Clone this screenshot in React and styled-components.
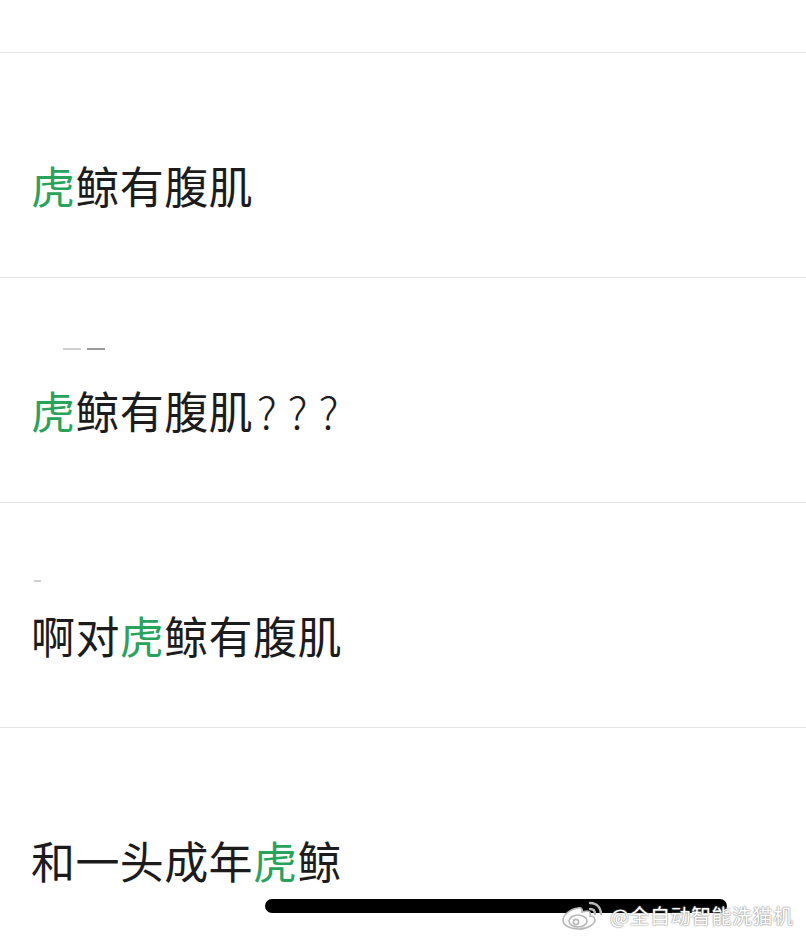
import React from 'react'
import styled, { createGlobalStyle } from 'styled-components'

const rows = [
    { parts: [['虎', 'g'], ['鲸有腹肌', '']] },
    { parts: [['虎', 'g'], ['鲸有腹肌', ''], ['???', 'q']], faint: 'wide' },
    { parts: [['啊对', ''], ['虎', 'g'], ['鲸有腹肌', '']], faint: 'dot' },
    { parts: [['和一头成年', ''], ['虎', 'g'], ['鲸', '']] },
]

function WeiboLogo() {
    return (
        <svg width="46" height="30" viewBox="0 0 46 30">
            <g fill="#fff" stroke="#b8b8b8" strokeWidth="1.6">
                <path d="M18 8 C10 9 3 15 3 20 C3 26 11 29 19 29 C28 29 35 24 35 20 C35 17 32 16 30 16 C31 13 30 11 27 11 C25 11 23 12 22 12 C23 9 21 7 18 8 Z" />
                <ellipse cx="18" cy="21" rx="9" ry="6" />
                <circle cx="16" cy="22" r="2.6" />
            </g>
            <g fill="none" stroke="#b8b8b8" strokeWidth="2.4" strokeLinecap="round">
                <path d="M30 9 C33 9 35 11 35 14" />
                <path d="M30 3 C37 3 41 8 41 14" />
            </g>
        </svg>
    )
}

function App() {
    return (
        <>
            <GlobalStyle />
            <Page>
                <TopSpace />
                {rows.map((row, i) => (
                    <Row key={i}>
                        {row.faint === 'wide' && (
                            <FaintLine $left={32} $below={28}>
                                <FaintBar $w={18} />
                                <FaintBar $w={18} $dark />
                            </FaintLine>
                        )}
                        {row.faint === 'dot' && (
                            <FaintLine $left={3} $below={21}>
                                <FaintBar $w={7} />
                            </FaintLine>
                        )}
                        <Line>
                            {row.parts.map(([t, kind], j) =>
                                kind === 'g' ? <Green key={j}>{t}</Green>
                                    : kind === 'q' ? <Marks key={j}>{t}</Marks>
                                    : <span key={j}>{t}</span>
                            )}
                        </Line>
                    </Row>
                ))}
            </Page>
            <HomeBar />
            <Watermark>
                <WeiboLogo />
                <MarkText>@全自动智能洗猫机</MarkText>
            </Watermark>
        </>
    )
}

export default App

const GlobalStyle = createGlobalStyle`
    html, body {
        margin: 0;
        padding: 0;
        background: #ffffff;
        overflow: hidden;
    }
    body {
        font-family: "Noto Sans CJK SC", "Noto Sans", sans-serif;
    }
`

const Page = styled.div`
    width: 806px;
    height: 938px;
    overflow: hidden;
    background: #ffffff;
`

const TopSpace = styled.div`
    height: 52px;
`

const Row = styled.div`
    border-top: 1px solid #e3e3e3;
    display: flex;
    flex-direction: column;
    justify-content: flex-end;
    padding: 0 0 60px 31px;
    height: 164px;
`

const FaintLine = styled.div`
    display: flex;
    gap: 6px;
    margin: 0 0 ${p => p.$below}px ${p => p.$left}px;
    height: 3px;
    align-items: center;
`

const FaintBar = styled.div`
    width: ${p => p.$w}px;
    height: 2px;
    background: ${p => (p.$dark ? '#9a9a9a' : '#cfcfcf')};
    filter: blur(0.6px);
`

const Line = styled.div`
    font-size: 44px;
    line-height: 64px;
    color: #1c1c1c;
    letter-spacing: 0.4px;
    white-space: nowrap;
`

const Green = styled.span`
    color: #28a35c;
`

const Marks = styled.span`
    letter-spacing: 11px;
    margin-left: 4px;
    font-weight: 300;
`

const HomeBar = styled.div`
    position: absolute;
    left: 265px;
    top: 899px;
    width: 462px;
    height: 14px;
    border-radius: 7px;
    background: #000000;
`

const Watermark = styled.div`
    position: absolute;
    left: 560px;
    top: 900px;
    display: flex;
    align-items: center;
    gap: 4px;
`

const MarkText = styled.span`
    font-size: 20px;
    color: #ffffff;
    letter-spacing: 0.5px;
    text-shadow: 0 0 2px #8a8a8a, 0 0 1px #8a8a8a;
`
